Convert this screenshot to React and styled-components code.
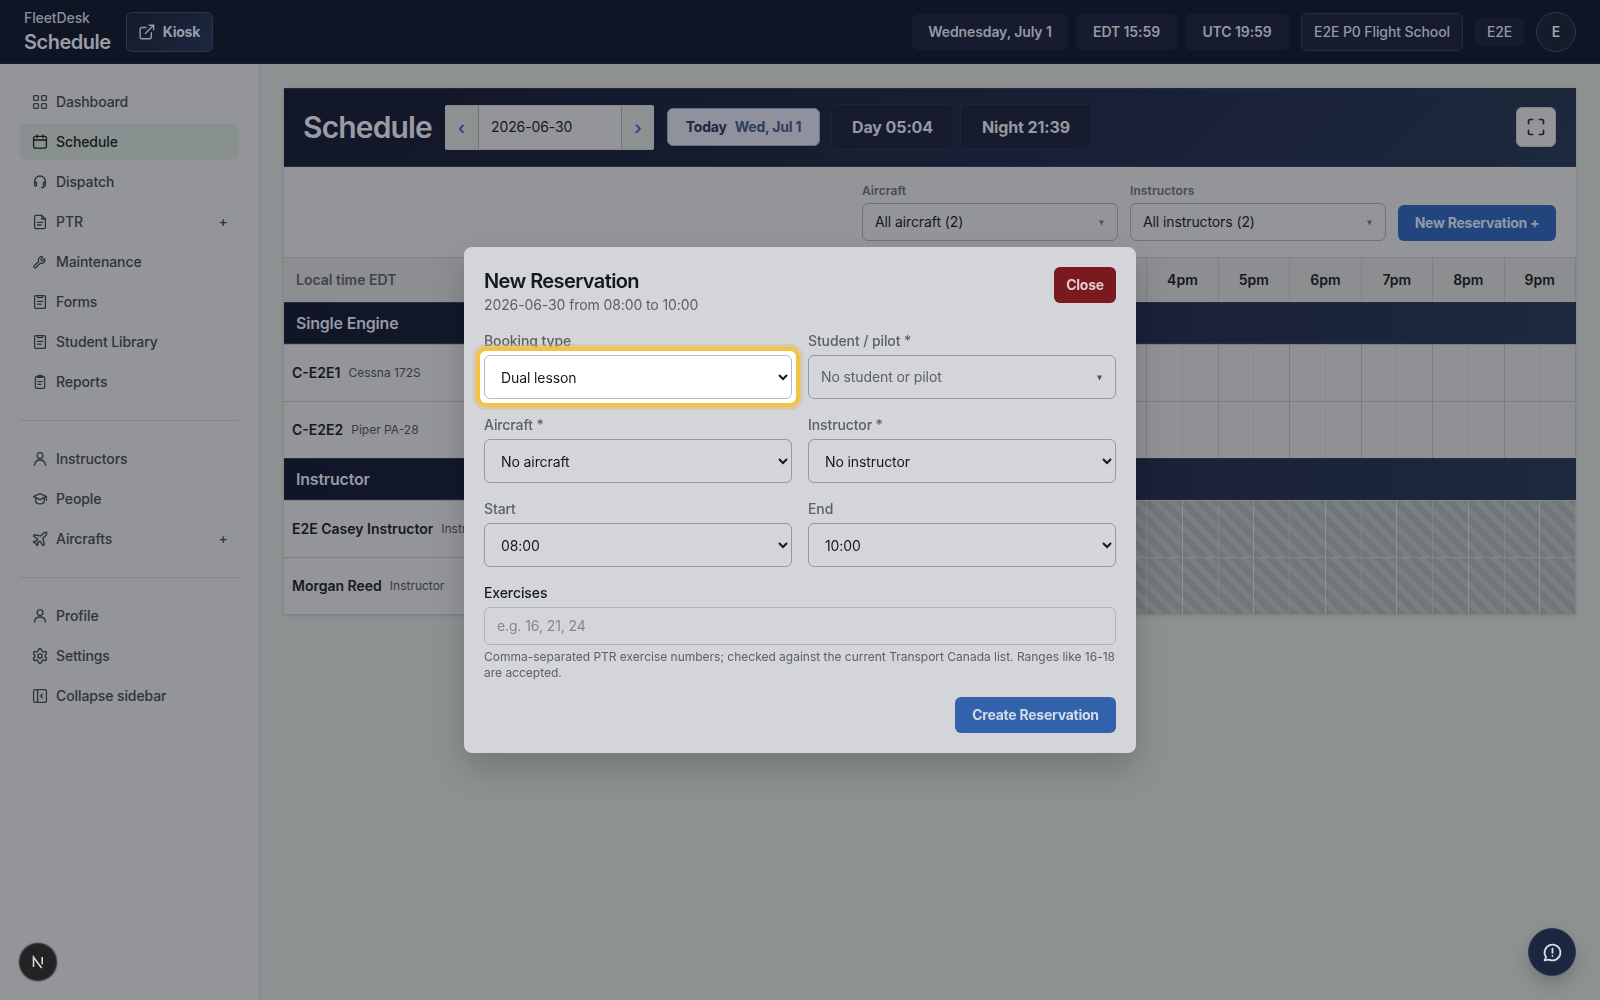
import React, { useState } from 'react';
import styled, { createGlobalStyle } from 'styled-components';
import { Maximize, Wrench, Plane, Settings, ExternalLink } from 'lucide-react';

const GlobalStyle = createGlobalStyle`
  * {
    box-sizing: border-box;
  }

  body {
    margin: 0;
    background: #8d9191;
    font-family: Inter, 'Liberation Sans', sans-serif;
    font-size: 14px;
    line-height: 20px;
    letter-spacing: -0.1px;
    color: #14191b;
    -webkit-font-smoothing: antialiased;
  }

  button, input, select {
    font: inherit;
    letter-spacing: inherit;
  }
`;

const Page = styled.div`
  height: 1000px;
  display: flex;
  flex-direction: column;
  overflow: hidden;
`;

/* Top bar */

const TopBar = styled.header`
  height: 64px;
  flex: none;
  display: flex;
  align-items: center;
  justify-content: space-between;
  padding: 0 24px;
  background: #101525;
  border-bottom: 1px solid #161c2d;
`;

const TopGroup = styled.div`
  display: flex;
  align-items: center;
  gap: ${(props) => props.$gap || 12}px;
`;

const Brand = styled.div`
  width: 86px;
  color: #8b8f99;
  font-weight: 500;
  line-height: 20px;
  margin-right: 4px;
  white-space: nowrap;
`;

const BrandTitle = styled.div`
  color: #9b9da6;
  font-size: 20px;
  font-weight: 600;
  line-height: 28px;
  letter-spacing: -0.5px;
`;

const KioskButton = styled.button`
  display: flex;
  align-items: center;
  gap: 8px;
  width: 87px;
  height: 40px;
  padding: 0 12px;
  border: 1px solid #2d3546;
  border-radius: 6px;
  background: linear-gradient(135deg, #131a2b, #1c2840);
  color: #9b9da6;
  font-weight: 700;
  letter-spacing: -0.25px;
`;

const Chip = styled.div`
  width: ${(props) => props.$width}px;
  height: ${(props) => props.$height || 36}px;
  display: flex;
  align-items: center;
  justify-content: center;
  border-radius: 6px;
  border: 1px solid ${(props) => (props.$outlined ? '#252c3d' : '#161c2d')};
  background: #161c2d;
  color: #9598a2;
  font-weight: ${(props) => props.$weight || 600};
  white-space: nowrap;
`;

const Avatar = styled.div`
  width: 40px;
  height: 40px;
  border-radius: 50%;
  border: 1px solid #303748;
  background: #151b2b;
  color: #a0a2aa;
  display: flex;
  align-items: center;
  justify-content: center;
  font-weight: 600;
`;

/* Sidebar */

const Body = styled.div`
  flex: 1;
  display: flex;
  min-height: 0;
`;

const Sidebar = styled.nav`
  width: 260px;
  flex: none;
  padding: 20px 20px 0;
  background: #949598;
  border-right: 1px solid #858889;
`;

const NavGroup = styled.div`
  display: flex;
  flex-direction: column;
  gap: 4px;

  & + & {
    margin-top: 20px;
    padding-top: 20px;
    border-top: 1px solid #868789;
  }
`;

const NavItem = styled.a`
  height: 36px;
  display: flex;
  align-items: center;
  gap: 8px;
  padding: 0 12px;
  border-radius: 6px;
  font-weight: 500;
  color: ${(props) => (props.$active ? '#151a1b' : '#2d3537')};
  background: ${(props) => (props.$active ? '#899190' : 'transparent')};
`;

const NavPlus = styled.span`
  margin-left: auto;
  width: 8px;
  display: flex;
  justify-content: center;
`;

/* Schedule panel */

const Main = styled.main`
  flex: 1;
  padding: 24px 24px 0;
`;

const Panel = styled.section`
  background: #949598;
  box-shadow: 0 1px 3px rgba(0, 0, 0, 0.16);
`;

const Banner = styled.div`
  height: 79px;
  display: flex;
  align-items: center;
  padding: 0 20px 1px;
  background: linear-gradient(135deg, #111628, #192035 60%, #1d293c);
  border-top: 1px solid #21283a;
  border-bottom: 1px solid #262f42;
`;

const BannerTitle = styled.h1`
  margin: 0 13px 0 -1px;
  width: 129px;
  font-size: 30px;
  line-height: 36px;
  font-weight: 600;
  letter-spacing: -0.85px;
  color: #9a9ca5;
  white-space: nowrap;
`;

const DateGroup = styled.div`
  display: flex;
  width: 209px;
  height: 45px;
  border-radius: 2px;
  overflow: hidden;
  border: solid #85898c;
  border-width: 1px 0;
  background: #949598;
`;

const DateStep = styled.button`
  width: ${(props) => props.$width}px;
  padding: 1px 0 0;
  border: 0;
  background: #8e9192;
  color: #264d82;
  font-size: 18px;
  font-weight: 600;
`;

const DateValue = styled.div`
  flex: 1;
  display: flex;
  align-items: center;
  padding-left: 12px;
  border: solid #6f7477;
  border-width: 0 1px;
`;

const TodayButton = styled.button`
  margin: 0 11px 0 13px;
  width: 153px;
  height: 38px;
  display: flex;
  align-items: center;
  justify-content: center;
  gap: 8px;
  padding: 0;
  border: 1px solid #6b7185;
  border-radius: 6px;
  background: #8f919c;
  color: #1b2842;
  font-weight: 700;
  letter-spacing: -0.2px;

  span {
    color: #2d3d5c;
  }
`;

const SunTime = styled.div`
  width: ${(props) => props.$width}px;
  height: 46px;
  display: flex;
  align-items: center;
  justify-content: center;
  margin-right: 6px;
  border: 1px solid #1e2538;
  border-radius: 6px;
  background: #161c2d;
  color: #9699a3;
  font-size: 16px;
  font-weight: 700;
`;

const FullscreenButton = styled.button`
  margin-left: auto;
  width: 40px;
  height: 40px;
  display: flex;
  align-items: center;
  justify-content: center;
  padding: 0;
  border: 1px solid #7f838b;
  border-radius: 6px;
  background: #949598;
  color: #1d2325;
`;

const Filters = styled.div`
  height: 90px;
  display: flex;
  justify-content: flex-end;
  align-items: flex-end;
  gap: 12px;
  padding: 0 20px 16px;
`;

const Filter = styled.div`
  width: 256px;
  color: #474c4e;
  font-size: 12px;
  font-weight: 600;
  line-height: 16px;
  letter-spacing: 0.1px;
`;

const Picker = styled.div`
  height: ${(props) => props.$height || 38}px;
  margin-top: 4px;
  display: flex;
  align-items: center;
  justify-content: space-between;
  padding: 0 12px;
  border: 1px solid ${(props) => props.$line || '#717477'};
  border-radius: 6px;
  font-size: 14px;
  font-weight: 400;
  letter-spacing: -0.1px;
  color: ${(props) => props.$color || '#14191b'};
`;

const Caret = styled.svg`
  width: 5px;
  height: 6px;
  margin: 1px 1px 0 0;
  fill: #4e5356;
`;

const BlueButton = styled.button`
  height: 36px;
  width: ${(props) => props.$width}px;
  padding: 0;
  border: 0;
  border-radius: 6px;
  background: ${(props) => props.$bg};
  color: ${(props) => props.$color};
  font-weight: 700;
  letter-spacing: -0.25px;
`;

const Row = styled.div`
  display: grid;
  grid-template-columns: 219px 1fr;
  height: ${(props) => props.$height || 57}px;
  letter-spacing: 0;
`;

const TimeRow = styled(Row)`
  background: #8d8e91;
  border-top: 1px solid #7e8082;
  font-weight: 600;
`;

const TimeLabel = styled.div`
  display: flex;
  align-items: center;
  padding-left: 12px;
  color: #3f4446;
`;

const Hours = styled.div`
  display: grid;
  grid-template-columns: repeat(15, 1fr);
  border-right: 1px solid #7e8082;
`;

const Hour = styled.div`
  display: flex;
  align-items: center;
  justify-content: center;
  border-left: 1px solid #7e8082;
`;

const Band = styled.div`
  height: 42px;
  display: flex;
  align-items: center;
  padding-left: 12px;
  border-top: 1px solid #262d3e;
  border-bottom: 1px solid #232a3c;
  background: linear-gradient(90deg, #101527, #192036 60%, #1d293c);
  color: #979aa4;
  font-size: 16px;
  font-weight: 600;
  letter-spacing: -0.2px;
`;

const Resource = styled.div`
  display: flex;
  align-items: center;
  gap: 8px;
  padding-left: 8px;
  border-top: 1px solid #7e8082;
  font-weight: 600;
  white-space: nowrap;
  overflow: hidden;

  small {
    font-size: 12px;
    font-weight: 400;
    color: #363c3e;
  }
`;

const Slots = styled.div`
  display: grid;
  grid-template-columns: repeat(30, 1fr);
  border-right: 1px solid #808385;
`;

const Slot = styled.div`
  background: ${(props) =>
    props.$off
      ? 'repeating-linear-gradient(45deg, #717678 0 6px, #7a7f80 6px 12px)'
      : '#909194'};
  border-left: 1px solid
    ${(props) =>
      props.$off
        ? props.$half ? '#8e9293' : '#808586'
        : props.$half ? '#88898c' : '#7b7d80'};
  border-top: 1px solid ${(props) => (props.$off ? '#828788' : '#7b7d80')};
`;

/* Dialog */

const Overlay = styled.div`
  position: fixed;
  inset: 0;
  display: flex;
  align-items: center;
  justify-content: center;
`;

const Dialog = styled.div`
  width: 672px;
  height: 506px;
  padding: 20px;
  border-radius: 8px;
  background: #d4d5d9;
  box-shadow: 0 16px 32px rgba(0, 0, 0, 0.18);
`;

const DialogHead = styled.div`
  display: flex;
  justify-content: space-between;
  align-items: flex-start;
  margin-bottom: 16px;
  color: #5c6164;

  h2 {
    margin: 0;
    font-size: 20px;
    line-height: 28px;
    font-weight: 600;
    letter-spacing: -0.6px;
    color: #14191b;
  }
`;

const CloseButton = styled.button`
  width: 62px;
  height: 36px;
  padding: 0;
  border: 0;
  border-radius: 6px;
  background: #7b1a1e;
  color: #dfcdd0;
  font-weight: 700;
  letter-spacing: -0.25px;
`;

const FormGrid = styled.div`
  display: grid;
  grid-template-columns: 1fr 1fr;
  gap: 16px;
  margin-bottom: 16px;
`;

const Label = styled.label`
  display: block;
  font-weight: 500;
  color: ${(props) => (props.$dark ? '#14191b' : '#5c6164')};
`;

const SelectWrap = styled.div`
  position: relative;
  height: 44px;
  margin-top: 4px;
`;

/* Spotlight drawn round the field of the current tour step */
const Spotlight = styled.div`
  position: absolute;
  inset: -4px;
  border-radius: 6px;
  background: #fff;
  box-shadow: 0 0 0 4px #f3c345, 0 0 0 7px rgba(225, 180, 110, 0.38);
`;

const Select = styled.select`
  position: relative;
  display: block;
  width: 100%;
  height: 44px;
  padding: 0 0 0 12px;
  border: 1px solid ${(props) => (props.$lit ? '#b4b8c0' : '#96999d')};
  border-radius: 6px;
  background: ${(props) => (props.$lit ? '#fff' : '#d4d5d9')};
  color: #14191b;
`;

const TextInput = styled.input`
  display: block;
  width: 100%;
  height: 38px;
  margin-top: 4px;
  padding: 0 12px 1px;
  border: 1px solid #b0b3b6;
  border-radius: 6px;
  background: transparent;

  &::placeholder {
    color: #84888b;
    opacity: 1;
  }
`;

const Hint = styled.p`
  margin: 4px 0 16px;
  font-size: 12px;
  line-height: 16px;
  letter-spacing: -0.01px;
  color: #5c6164;
`;

const DialogFoot = styled.div`
  display: flex;
  justify-content: flex-end;
`;

/* Floating buttons */

const DevBadge = styled.div`
  position: fixed;
  left: 20px;
  bottom: 20px;
  width: 36px;
  height: 36px;
  border-radius: 50%;
  background: #222324;
  box-shadow: 0 0 0 1px #3b3c3e, 0 0 0 2px #77787a;
  display: flex;
  align-items: center;
  justify-content: center;
`;

const HelpButton = styled.button`
  position: fixed;
  right: 24px;
  bottom: 24px;
  width: 48px;
  height: 48px;
  display: flex;
  align-items: center;
  justify-content: center;
  padding: 0 0 0 1px;
  border: 1px solid #2e3a55;
  border-radius: 50%;
  background: #1c263f;
  color: #d3d8e4;
  box-shadow: 0 8px 16px rgba(0, 0, 0, 0.18);
`;

const Stroke = styled.svg`
  width: 16px;
  height: 16px;
  flex: none;
  fill: none;
  stroke: currentColor;
  stroke-width: 1.3;
  stroke-linecap: round;
  stroke-linejoin: round;
`;

const glyphs = {
  dashboard: (
    <>
      <rect x="1.6" y="1.6" width="4.8" height="4.8" rx="1" />
      <rect x="9.6" y="1.6" width="4.8" height="4.8" rx="1" />
      <rect x="1.6" y="9.6" width="4.8" height="4.8" rx="1" />
      <rect x="9.6" y="9.6" width="4.8" height="4.8" rx="1" />
    </>
  ),
  calendar: (
    <>
      <rect x="1.6" y="2.4" width="12.8" height="11.8" rx="1.6" />
      <path d="M1.6 6h12.8M5 .9v2.8M11 .9v2.8" />
    </>
  ),
  headset: (
    <>
      <path d="M2.6 10V7.4a5.4 5.4 0 0 1 10.8 0V10" />
      <path d="M2.6 8h.8a1.2 1.2 0 0 1 1.2 1.2v1.6A1.2 1.2 0 0 1 3.4 12a.8.8 0 0 1-.8-.8zM13.4 8h-.8a1.2 1.2 0 0 0-1.2 1.2v2.6h1.2a.8.8 0 0 0 .8-.8z" />
      <path d="M12.6 12c0 .9-.7 1.5-1.8 1.5H9.6" />
    </>
  ),
  file: (
    <>
      <path d="M9.8 1.4H4A1.4 1.4 0 0 0 2.6 2.8v10.4A1.4 1.4 0 0 0 4 14.6h8a1.4 1.4 0 0 0 1.4-1.4V5z" />
      <path d="M9.8 1.4V5h3.6M5.4 8.3h5.2M5.4 11h3.6" />
    </>
  ),
  form: (
    <>
      <rect x="2.6" y="1.6" width="10.8" height="12.8" rx="1.2" />
      <path d="M5.6 1.6v2h4.8v-2M5.4 7.3h5.2M5.4 10.2h3.6" />
    </>
  ),
  report: (
    <>
      <rect x="3.4" y="2.4" width="9.2" height="12" rx="1.4" />
      <path d="M5.6 2.6c0-1.6 4.8-1.6 4.8 0v.8H5.6zM6 7.6h4M6 10.4h2.8" />
    </>
  ),
  user: (
    <>
      <circle cx="8" cy="4.6" r="2.9" />
      <path d="M2.5 14.2c.3-3.3 2.3-5.2 5.5-5.2s5.2 1.9 5.5 5.2" />
    </>
  ),
  cap: (
    <>
      <path d="M8 2.6 1.6 5.6 8 8.6l6.4-3z" />
      <path d="M3.8 6.8v3.6c0 1.3 1.8 2.4 4.2 2.4s4.2-1.1 4.2-2.4V6.8M14.4 5.6v3.8" />
    </>
  ),
  collapse: (
    <>
      <rect x="1.6" y="1.6" width="12.8" height="12.8" rx="1.4" />
      <path d="M5.6 1.6v12.8M10.4 6.2 8.6 8l1.8 1.8" />
    </>
  ),
};

const NavIcon = ({ name }) => {
  if (name === 'wrench') return <Wrench size={16} strokeWidth={2.3} viewBox="-1.5 -3 29 29" />;
  if (name === 'plane') return <Plane size={16} strokeWidth={1.9} viewBox="1 1 22 22" />;
  if (name === 'settings') return <Settings size={16} strokeWidth={1.9} viewBox="1 1 22 22" />;
  return <Stroke viewBox="0 0 16 16">{glyphs[name]}</Stroke>;
};

const PickerCaret = () => (
  <Caret viewBox="0 0 5 6">
    <path d="M0 .6h5L2.5 5.6z" />
  </Caret>
);

const navGroups = [
  [
    { label: 'Dashboard', icon: 'dashboard' },
    { label: 'Schedule', icon: 'calendar', active: true },
    { label: 'Dispatch', icon: 'headset' },
    { label: 'PTR', icon: 'file', plus: true },
    { label: 'Maintenance', icon: 'wrench' },
    { label: 'Forms', icon: 'form' },
    { label: 'Student Library', icon: 'form' },
    { label: 'Reports', icon: 'report' },
  ],
  [
    { label: 'Instructors', icon: 'user' },
    { label: 'People', icon: 'cap' },
    { label: 'Aircrafts', icon: 'plane', plus: true },
  ],
  [
    { label: 'Profile', icon: 'user' },
    { label: 'Settings', icon: 'settings' },
    { label: 'Collapse sidebar', icon: 'collapse' },
  ],
];

const hours = ['7am', '8am', '9am', '10am', '11am', '12pm', '1pm', '2pm', '3pm', '4pm', '5pm', '6pm', '7pm', '8pm', '9pm'];

const sections = [
  {
    title: 'Single Engine',
    rows: [
      { name: 'C-E2E1', detail: 'Cessna 172S' },
      { name: 'C-E2E2', detail: 'Piper PA-28' },
    ],
  },
  {
    title: 'Instructor',
    off: true,
    rows: [
      { name: 'E2E Casey Instructor', detail: 'Instructor' },
      { name: 'Morgan Reed', detail: 'Instructor' },
    ],
  },
];

const SelectField = ({ label, value, lit }) => (
  <div>
    <Label>{label}</Label>
    <SelectWrap>
      {lit && <Spotlight />}
      <Select $lit={lit} defaultValue={value}>
        <option>{value}</option>
      </Select>
    </SelectWrap>
  </div>
);

const ReservationDialog = ({ onClose }) => (
  <Overlay>
    <Dialog role="dialog">
      <DialogHead>
        <div>
          <h2>New Reservation</h2>
          2026-06-30 from 08:00 to 10:00
        </div>
        <CloseButton onClick={onClose}>Close</CloseButton>
      </DialogHead>
      <FormGrid>
        <SelectField label="Booking type" value="Dual lesson" lit />
        <div>
          <Label>Student / pilot *</Label>
          <Picker $height={44} $line="#96999d" $color="#5c6164">
            No student or pilot
            <PickerCaret />
          </Picker>
        </div>
        <SelectField label="Aircraft *" value="No aircraft" />
        <SelectField label="Instructor *" value="No instructor" />
        <SelectField label="Start" value="08:00" />
        <SelectField label="End" value="10:00" />
      </FormGrid>
      <Label $dark>Exercises</Label>
      <TextInput placeholder="e.g. 16, 21, 24" />
      <Hint>
        Comma-separated PTR exercise numbers; checked against the current Transport Canada list. Ranges like 16-18 are accepted.
      </Hint>
      <DialogFoot>
        <BlueButton $width={161} $bg="#3262ac" $color="#d3dbe8">Create Reservation</BlueButton>
      </DialogFoot>
    </Dialog>
  </Overlay>
);

const App = () => {
  const [dialogOpen, setDialogOpen] = useState(true);

  return (
    <Page>
      <GlobalStyle />
      <TopBar>
        <TopGroup>
          <Brand>
            FleetDesk
            <BrandTitle>Schedule</BrandTitle>
          </Brand>
          <KioskButton>
            <ExternalLink size={16} strokeWidth={1.8} viewBox="1.5 1.5 21 21" />
            Kiosk
          </KioskButton>
        </TopGroup>
        <TopGroup>
          <TopGroup $gap={8}>
            <Chip $width={156}>Wednesday, July 1</Chip>
            <Chip $width={101}>EDT 15:59</Chip>
            <Chip $width={104}>UTC 19:59</Chip>
          </TopGroup>
          <Chip $width={162} $height={38} $outlined $weight={500}>E2E P0 Flight School</Chip>
          <Chip $width={49} $height={28} $weight={500}>E2E</Chip>
          <Avatar>E</Avatar>
        </TopGroup>
      </TopBar>
      <Body>
        <Sidebar>
          {navGroups.map((items, i) => (
            <NavGroup key={i}>
              {items.map((item) => (
                <NavItem key={item.label} $active={item.active}>
                  <NavIcon name={item.icon} />
                  {item.label}
                  {item.plus && <NavPlus>+</NavPlus>}
                </NavItem>
              ))}
            </NavGroup>
          ))}
        </Sidebar>
        <Main>
          <Panel>
            <Banner>
              <BannerTitle>Schedule</BannerTitle>
              <DateGroup>
                <DateStep $width={33}>‹</DateStep>
                <DateValue>2026-06-30</DateValue>
                <DateStep $width={32}>›</DateStep>
              </DateGroup>
              <TodayButton>
                Today <span>Wed, Jul 1</span>
              </TodayButton>
              <SunTime $width={123}>Day 05:04</SunTime>
              <SunTime $width={132}>Night 21:39</SunTime>
              <FullscreenButton>
                <Maximize size={20} strokeWidth={2} />
              </FullscreenButton>
            </Banner>
            <Filters>
              <Filter>
                Aircraft
                <Picker>
                  All aircraft (2)
                  <PickerCaret />
                </Picker>
              </Filter>
              <Filter>
                Instructors
                <Picker>
                  All instructors (2)
                  <PickerCaret />
                </Picker>
              </Filter>
              <BlueButton $width={158} $bg="#23457e" $color="#9299a6" onClick={() => setDialogOpen(true)}>
                New Reservation +
              </BlueButton>
            </Filters>
            <TimeRow $height={45}>
              <TimeLabel>Local time EDT</TimeLabel>
              <Hours>
                {hours.map((hour) => (
                  <Hour key={hour}>{hour}</Hour>
                ))}
              </Hours>
            </TimeRow>
            {sections.map((section) => (
              <React.Fragment key={section.title}>
                <Band>{section.title}</Band>
                {section.rows.map((row) => (
                  <Row key={row.name}>
                    <Resource>
                      {row.name}
                      <small>{row.detail}</small>
                    </Resource>
                    <Slots>
                      {Array.from({ length: 30 }, (_, i) => (
                        <Slot key={i} $off={section.off} $half={i % 2 === 1} />
                      ))}
                    </Slots>
                  </Row>
                ))}
              </React.Fragment>
            ))}
          </Panel>
        </Main>
      </Body>
      {dialogOpen && <ReservationDialog onClose={() => setDialogOpen(false)} />}
      <DevBadge>
        <svg width="14" height="14" viewBox="0 0 14 14" fill="none" stroke="#d8d8d8" strokeWidth="1.6">
          <path d="M2.5 12V2.2L10.6 13M11.2 2v7.2" />
        </svg>
      </DevBadge>
      <HelpButton>
        <svg width="21" height="21" viewBox="0 0 24 24" fill="none" stroke="currentColor" strokeWidth="2.1" strokeLinecap="round" strokeLinejoin="round">
          <path d="M3 21l1.65-3.8a9 9 0 1 1 3.4 2.9L3 21M12 7.5v5M12 16v.01" />
        </svg>
      </HelpButton>
    </Page>
  );
};

export default App;
